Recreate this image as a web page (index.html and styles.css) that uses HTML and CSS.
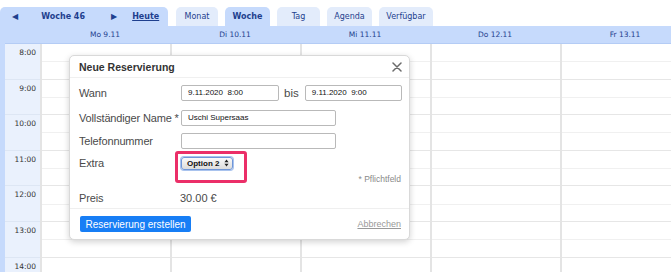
FILE: index.html
```html
<!DOCTYPE html>
<html lang="de">
<head>
<meta charset="utf-8">
<title>Kalender</title>
<link rel="stylesheet" href="styles.css">
</head>
<body>
<div class="page">
  <div class="tabs">
    <div class="nav-tab">
      <span class="arrow">&#9664;</span>
      <span class="week">Woche 46</span>
      <span class="arrow">&#9654;</span>
      <span class="today">Heute</span>
    </div>
    <div class="tab">Monat</div>
    <div class="tab active">Woche</div>
    <div class="tab">Tag</div>
    <div class="tab">Agenda</div>
    <div class="tab">Verfügbar</div>
  </div>
  <div class="calendar">
    <div class="head">
      <div class="corner"></div>
      <div class="day-label">Mo 9.11</div>
      <div class="day-label">Di 10.11</div>
      <div class="day-label">Mi 11.11</div>
      <div class="day-label">Do 12.11</div>
      <div class="day-label">Fr 13.11</div>
    </div>
    <div class="grid">
      <div class="col times">
        <div class="hour"><span>8:00</span></div>
        <div class="hour"><span>9:00</span></div>
        <div class="hour"><span>10:00</span></div>
        <div class="hour"><span>11:00</span></div>
        <div class="hour"><span>12:00</span></div>
        <div class="hour"><span>13:00</span></div>
        <div class="hour"><span>14:00</span></div>
      </div>
      <div class="col day"><div class="hour"></div><div class="hour"></div><div class="hour"></div><div class="hour"></div><div class="hour"></div><div class="hour"></div><div class="hour"></div></div>
      <div class="col day"><div class="hour"></div><div class="hour"></div><div class="hour"></div><div class="hour"></div><div class="hour"></div><div class="hour"></div><div class="hour"></div></div>
      <div class="col day"><div class="hour"></div><div class="hour"></div><div class="hour"></div><div class="hour"></div><div class="hour"></div><div class="hour"></div><div class="hour"></div></div>
      <div class="col day"><div class="hour"></div><div class="hour"></div><div class="hour"></div><div class="hour"></div><div class="hour"></div><div class="hour"></div><div class="hour"></div></div>
      <div class="col day"><div class="hour"></div><div class="hour"></div><div class="hour"></div><div class="hour"></div><div class="hour"></div><div class="hour"></div><div class="hour"></div></div>
    </div>
  </div>

  <div class="modal">
    <div class="modal-head">
      <span class="modal-title">Neue Reservierung</span>
      <svg class="close" width="10" height="10" viewBox="0 0 10 10"><path d="M1 1L9 9M9 1L1 9" stroke="#6b6b6b" stroke-width="1.5" stroke-linecap="round"/></svg>
    </div>
    <div class="modal-body">
      <div class="row r1">
        <span class="label">Wann</span>
        <div class="field">
          <div class="input w98">9.11.2020  8:00</div>
          <span class="bis">bis</span>
          <div class="input w97">9.11.2020  9:00</div>
        </div>
      </div>
      <div class="row r2">
        <span class="label">Vollständiger Name *</span>
        <div class="field"><div class="input w155">Uschi Supersaas</div></div>
      </div>
      <div class="row r3">
        <span class="label">Telefonnummer</span>
        <div class="field"><div class="input w155"></div></div>
      </div>
      <div class="row r4">
        <span class="label">Extra</span>
        <div class="field">
          <div class="select-wrap">
            <div class="select">Option 2
              <svg class="updown" width="5" height="8" viewBox="0 0 5 8"><path d="M2.5 0.5L4.6 3.2H0.4Z M2.5 7.5L4.6 4.8H0.4Z" fill="#222"/></svg>
            </div>
          </div>
        </div>
      </div>
      <div class="required">* Pflichtfeld</div>
      <div class="row r5">
        <span class="label">Preis</span>
        <div class="field price">30.00 €</div>
      </div>
    </div>
    <div class="modal-foot">
      <div class="btn">Reservierung erstellen</div>
      <span class="cancel">Abbrechen</span>
    </div>
  </div>
</div>
</body>
</html>
```

FILE: styles.css
```css
* { box-sizing: border-box; }
html, body { margin: 0; padding: 0; background: #fff; }
body { width: 671px; height: 272px; overflow: hidden; font-family: "Liberation Sans", Arial, sans-serif; }

.page { position: relative; width: 671px; height: 272px; overflow: hidden; }

.tabs {
  display: flex;
  align-items: flex-end;
  gap: 7px;
  height: 26px;
  padding-top: 7px;
  font-family: "DejaVu Sans", Verdana, sans-serif;
  font-size: 8px;
  color: #1e3f8e;
}
.nav-tab {
  width: 168px;
  height: 19px;
  background: #c6dafc;
  border-radius: 5px 5px 0 0;
  display: flex;
  align-items: center;
  padding-left: 12px;
  margin-right: 1px;
}
.nav-tab .arrow { font-size: 8px; color: #1e3f8e; }
.nav-tab .week { font-weight: bold; margin-left: 23px; margin-right: 26px; }
.nav-tab .today { font-weight: bold; text-decoration: underline; margin-left: 15px; }
.tab {
  height: 19px;
  background: #e3ecfb;
  border-radius: 5px 5px 0 0;
  display: flex;
  align-items: center;
  justify-content: center;
  padding: 0 7px;
}
.tab:nth-child(2) { width: 42px; }
.tab:nth-child(3) { width: 45px; }
.tab:nth-child(4) { width: 43px; }
.tab:nth-child(5) { width: 45px; }
.tab:nth-child(6) { width: 54px; }
.tab.active { background: #c6dafc; font-weight: bold; }

.calendar { border-left: 5px solid #c6dafc; }
.head {
  display: grid;
  grid-template-columns: 35px repeat(5, 130px);
  height: 18px;
  background: #c6dafc;
  border-bottom: 1px solid #b4ccf5;
  font-family: "DejaVu Sans", Verdana, sans-serif;
  font-size: 7.5px;
  color: #1e3f8e;
}
.day-label { display: flex; align-items: center; justify-content: center; }

.grid {
  display: grid;
  grid-template-columns: 35px repeat(5, 130px);
}
.col { display: flex; flex-direction: column; }
.times { background: #eaf1fd; }
.day { border-left: 2px solid #e4e4e4; }
.hour {
  position: relative;
  height: 35.6px;
  flex: none;
  border-bottom: 1px solid #e6e6e6;
}
.day .hour::after {
  content: "";
  position: absolute;
  left: 0; right: 0;
  top: 17.3px;
  border-top: 1px solid #f0f0f0;
}
.times .hour { border-bottom-color: #dde6f4; }
.times .hour span {
  position: absolute;
  right: 4px;
  top: 4px;
  font-family: "DejaVu Sans", Verdana, sans-serif;
  font-size: 7.5px;
  color: #333;
}

.modal {
  position: absolute;
  left: 69px;
  top: 55px;
  width: 341px;
  height: 185px;
  background: #fff;
  border: 1px solid #d9d9d9;
  border-radius: 5px;
  box-shadow: 0 2px 6px rgba(0,0,0,0.18);
  color: #4a4a4a;
  font-size: 11px;
}
.modal-head {
  height: 22px;
  padding: 0 7px 0 9px;
  display: flex;
  align-items: center;
  justify-content: space-between;
  border-bottom: 1px solid #f0f0f0;
}
.modal-title { font-weight: bold; font-size: 10.5px; color: #333; padding-top: 1px; }
.close { margin-top: 1px; }

.modal-body { padding: 3px 8px 0 9px; }
.row { display: flex; align-items: center; }
.r1 { height: 24px; }
.r2 { height: 25px; }
.r3 { height: 22px; }
.r4 { height: 22px; }
.r5 { height: 22px; }
.label { width: 102px; flex: none; white-space: nowrap; letter-spacing: -0.15px; }
.field { display: flex; align-items: center; }
.input {
  height: 16px;
  border: 1px solid #b9b9b9;
  border-radius: 2px;
  background: #fff;
  font-size: 8px;
  color: #111;
  padding-left: 6px;
  line-height: 14px;
  white-space: pre;
}
.w98 { width: 98px; }
.w97 { width: 97px; }
.w155 { width: 155px; }
.bis { margin: 0 6px 0 5px; font-size: 11.5px; }

.select-wrap { position: relative; }
.select-wrap::before {
  content: "";
  position: absolute;
  left: -6px; top: -6px;
  width: 66px; height: 26px;
  border: 3px solid #eb2f68;
  border-radius: 3px;
}
.select {
  width: 52px;
  height: 13px;
  border: 1px solid #6f96d8;
  box-shadow: 0 0 0 1px #a9c3ee;
  border-radius: 3px;
  background: linear-gradient(#fafafa, #dcdcdc);
  font-size: 8px;
  font-weight: bold;
  color: #111;
  display: flex;
  align-items: center;
  justify-content: space-between;
  padding: 0 3px 0 5px;
}

.required {
  height: 10px;
  line-height: 10px;
  text-align: right;
  font-size: 8.5px;
  color: #8a8a8a;
  margin-bottom: 3px;
}
.price { margin-left: -1px; }

.modal-foot {
  position: absolute;
  left: 0; right: 0; bottom: 0;
  height: 31px;
  border-top: 1px solid #efefef;
  display: flex;
  align-items: center;
  justify-content: space-between;
  padding: 0 8px 0 10px;
}
.btn {
  width: 111px;
  height: 16px;
  background: #177ef5;
  border-radius: 2px;
  color: #fff;
  font-size: 10px;
  display: flex;
  align-items: center;
  justify-content: center;
}
.cancel { color: #999; font-size: 9px; text-decoration: underline; }
```
